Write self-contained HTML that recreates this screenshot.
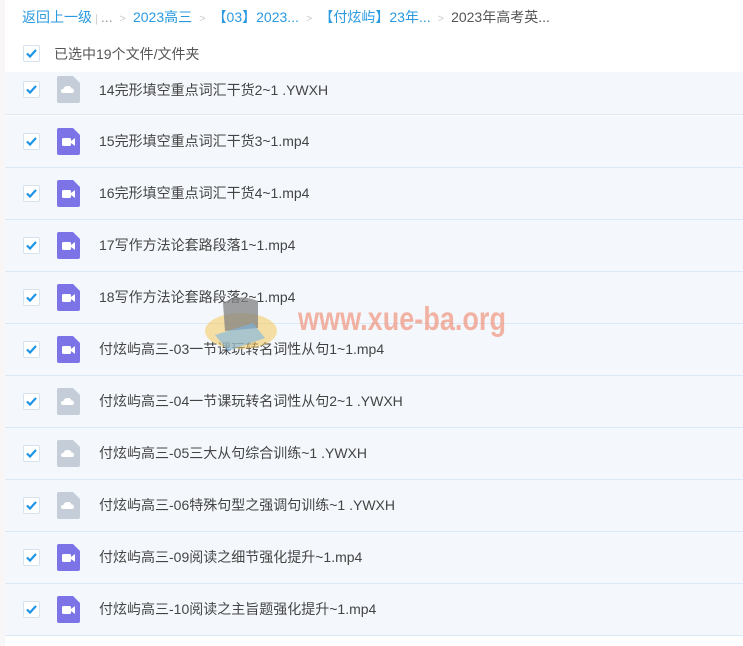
<!DOCTYPE html>
<html><head><meta charset="utf-8"><style>
body{margin:0;width:743px;height:646px;overflow:hidden;background:#fff;font-family:"Liberation Sans","Noto Sans CJK SC",sans-serif;position:relative}
.strip{position:absolute;left:0;top:0;width:5px;height:646px;background:#f8f6f6}
.bc{position:absolute;left:22px;top:7px;font-size:14px;color:#999;white-space:nowrap}
.bc a{color:#2a9ae0}
.bc .g{color:#ccc;margin:0 7px;font-size:11px}
.cb{position:absolute;left:23px;width:15px;height:15px;border:1px solid #d6e2ee;background:#fff;border-radius:2px}
.cb svg{position:absolute;left:1px;top:1px}
.sel{position:absolute;left:54px;top:44px;font-size:14px;color:#555}
.row{position:absolute;left:5px;width:738px;height:51px;background:#f4f8fc;border-bottom:1px solid #dce8f4}
.row .cb{left:18px;top:17px}
.row .ic{position:absolute;left:52px;top:12px}
.row .t{position:absolute;left:94px;top:15px;font-size:14px;color:#444;white-space:nowrap}
.r0 .cb{top:9px}.r0 .ic{top:4px}.r0 .t{top:8px}
.wm{position:absolute;left:298px;top:300px;font-size:33px;font-weight:bold;color:rgba(240,120,90,.55);font-family:"Liberation Sans",sans-serif;transform:scaleX(.82);transform-origin:left}
</style></head><body>
<svg width="0" height="0" style="position:absolute"><defs>
<symbol id="ck" viewBox="0 0 13 13"><path d="M2 6.5 L5 9.5 L11 3" stroke="#1e94e6" stroke-width="2.2" fill="none"/></symbol>
<symbol id="vid" viewBox="0 0 23 27"><path d="M2 0H16L23 7V25Q23 27 21 27H2Q0 27 0 25V2Q0 0 2 0Z" fill="#7b73e6"/><rect x="5" y="10" width="9" height="8" rx="1.5" fill="#fff"/><path d="M14 13L18 10V18L14 15Z" fill="#fff"/></symbol>
<symbol id="cl" viewBox="0 0 23 27"><path d="M2 0H16L23 7V25Q23 27 21 27H2Q0 27 0 25V2Q0 0 2 0Z" fill="#c5ced8"/><path d="M6 17Q4 17 4 15Q4 13 6.5 13Q7 10 10.5 10Q14 10 14.5 12.5Q17 12.5 17 15Q17 17 15 17Z" fill="#fff"/></symbol>
</defs></svg>
<div class="strip"></div>
<div class="bc"><a>返回上一级</a><span class="g" style="margin:0 3px">|</span>...<span class="g">&gt;</span><a>2023高三</a><span class="g">&gt;</span><a>【03】2023...</a><span class="g">&gt;</span><a>【付炫屿】23年...</a><span class="g">&gt;</span><span style="color:#555">2023年高考英...</span></div>
<div class="cb" style="top:45px"><svg width="13" height="13"><use href="#ck"/></svg></div>
<div class="sel">已选中19个文件/文件夹</div>

<div class="row r0" style="top:72px;height:42px"><div class="cb"><svg width="13" height="13"><use href="#ck"/></svg></div><svg class="ic" width="23" height="27"><use href="#cl"/></svg><div class="t">14完形填空重点词汇干货2~1 .YWXH</div></div>
<div class="row" style="top:116px"><div class="cb"><svg width="13" height="13"><use href="#ck"/></svg></div><svg class="ic" width="23" height="27"><use href="#vid"/></svg><div class="t">15完形填空重点词汇干货3~1.mp4</div></div>
<div class="row" style="top:168px"><div class="cb"><svg width="13" height="13"><use href="#ck"/></svg></div><svg class="ic" width="23" height="27"><use href="#vid"/></svg><div class="t">16完形填空重点词汇干货4~1.mp4</div></div>
<div class="row" style="top:220px"><div class="cb"><svg width="13" height="13"><use href="#ck"/></svg></div><svg class="ic" width="23" height="27"><use href="#vid"/></svg><div class="t">17写作方法论套路段落1~1.mp4</div></div>
<div class="row" style="top:272px"><div class="cb"><svg width="13" height="13"><use href="#ck"/></svg></div><svg class="ic" width="23" height="27"><use href="#vid"/></svg><div class="t">18写作方法论套路段落2~1.mp4</div></div>
<div class="row" style="top:324px"><div class="cb"><svg width="13" height="13"><use href="#ck"/></svg></div><svg class="ic" width="23" height="27"><use href="#vid"/></svg><div class="t">付炫屿高三-03一节课玩转名词性从句1~1.mp4</div></div>
<div class="row" style="top:376px"><div class="cb"><svg width="13" height="13"><use href="#ck"/></svg></div><svg class="ic" width="23" height="27"><use href="#cl"/></svg><div class="t">付炫屿高三-04一节课玩转名词性从句2~1 .YWXH</div></div>
<div class="row" style="top:428px"><div class="cb"><svg width="13" height="13"><use href="#ck"/></svg></div><svg class="ic" width="23" height="27"><use href="#cl"/></svg><div class="t">付炫屿高三-05三大从句综合训练~1 .YWXH</div></div>
<div class="row" style="top:480px"><div class="cb"><svg width="13" height="13"><use href="#ck"/></svg></div><svg class="ic" width="23" height="27"><use href="#cl"/></svg><div class="t">付炫屿高三-06特殊句型之强调句训练~1 .YWXH</div></div>
<div class="row" style="top:532px"><div class="cb"><svg width="13" height="13"><use href="#ck"/></svg></div><svg class="ic" width="23" height="27"><use href="#vid"/></svg><div class="t">付炫屿高三-09阅读之细节强化提升~1.mp4</div></div>
<div class="row" style="top:584px"><div class="cb"><svg width="13" height="13"><use href="#ck"/></svg></div><svg class="ic" width="23" height="27"><use href="#vid"/></svg><div class="t">付炫屿高三-10阅读之主旨题强化提升~1.mp4</div></div>

<svg style="position:absolute;left:203px;top:293px" width="85" height="60" viewBox="0 0 85 60"><ellipse cx="38" cy="38" rx="36" ry="18" fill="rgba(245,200,90,.55)"/><path d="M20 10Q35 0 55 8L55 35L22 38Z" fill="rgba(130,130,130,.75)"/><path d="M12 42L50 30L62 45L25 58Z" fill="rgba(120,180,230,.6)"/></svg>
<div class="wm">www.xue-ba.org</div>
</body></html>
